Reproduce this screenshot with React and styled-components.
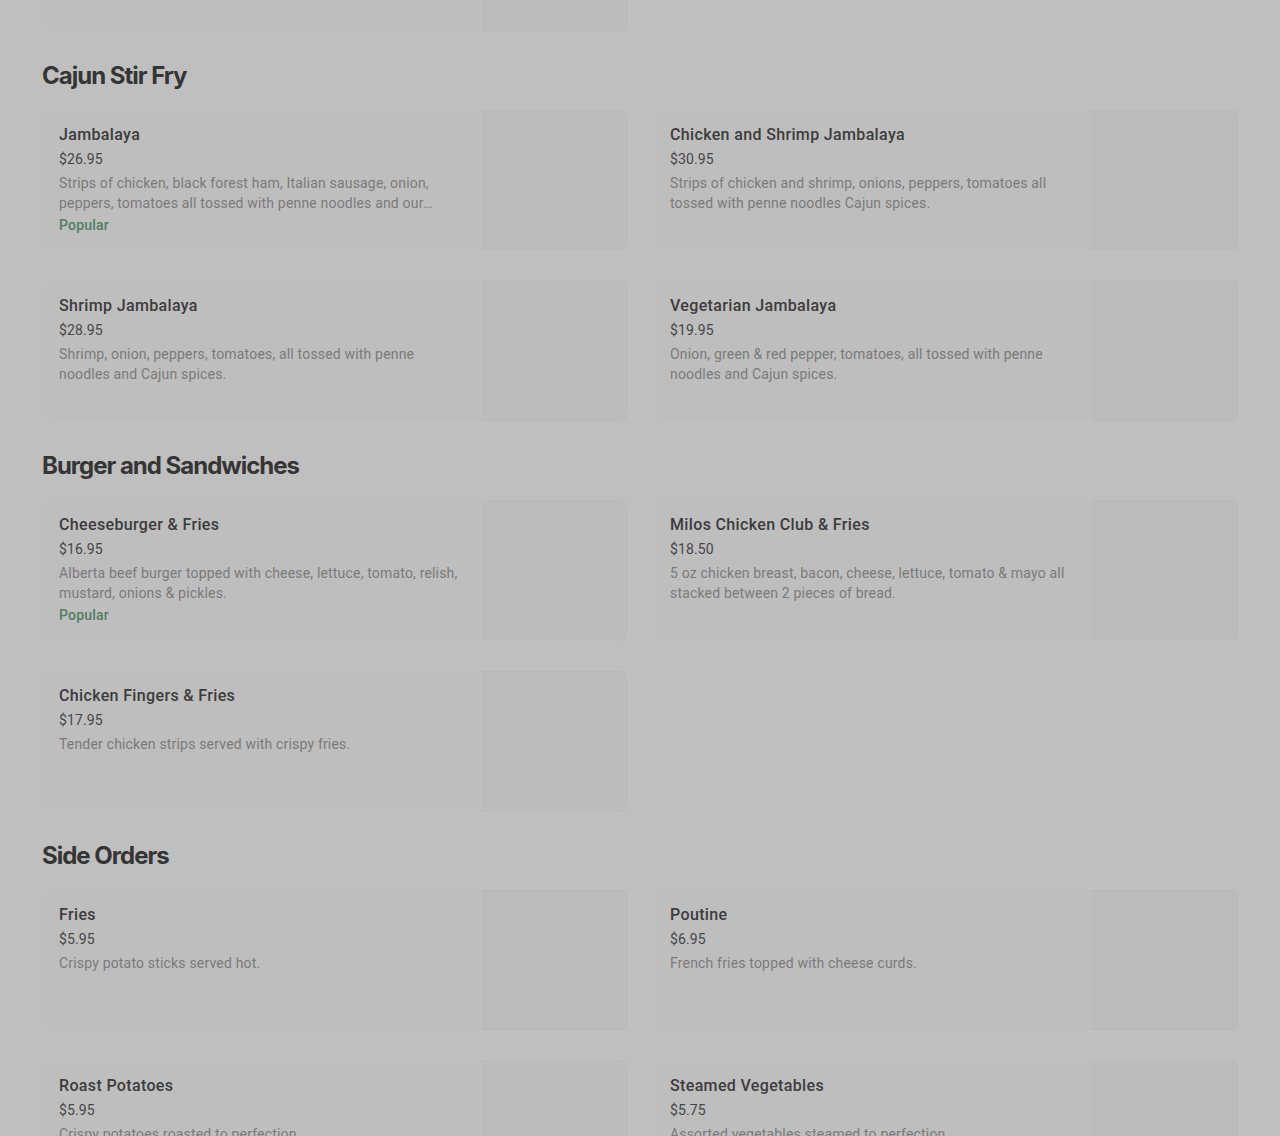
import React from "react";
import styled, { createGlobalStyle } from "styled-components";

const Global = createGlobalStyle`
  html, body { margin: 0; padding: 0; background: #bfbfbf; }
  body { overflow: hidden; font-family: Roboto, "Liberation Sans", Arial, sans-serif; }
  * { box-sizing: border-box; }
`;

const Page = styled.main`
  padding: 0 40px 0 42px;
  margin-top: -111px;
  min-height: 1300px;
`;

const Section = styled.section`
  display: flex;
  flex-direction: column;
`;

const Heading = styled.h2`
  margin: 27px 0 16px;
  font-family: Inter, "Liberation Sans", Arial, sans-serif;
  font-size: 24px;
  line-height: 32px;
  font-weight: 700;
  letter-spacing: -1px;
  color: #353535;
`;

const Grid = styled.div`
  display: grid;
  grid-template-columns: 1fr 1fr;
  column-gap: 24px;
  row-gap: 27px;
`;

const Card = styled.article`
  display: flex;
  height: 144px;
  border: 1px solid #c2c2c2;
  border-radius: 8px;
  background: #bebebe;
  overflow: hidden;
`;

const Body = styled.div`
  flex: 1;
  min-width: 0;
  padding: 16px;
  display: flex;
  flex-direction: column;
`;

const Title = styled.h3`
  margin: 0;
  font-size: 16px;
  line-height: 20px;
  font-weight: 500;
  letter-spacing: 0.35px;
  color: #3c3c3c;
`;

const Price = styled.div`
  margin-top: 4px;
  font-size: 14px;
  line-height: 20px;
  letter-spacing: 0.1px;
  color: #464646;
`;

const Desc = styled.p`
  margin: 4px 0 0;
  font-size: 14px;
  line-height: 20px;
  letter-spacing: 0.18px;
  color: #7a7a7a;
  display: -webkit-box;
  -webkit-line-clamp: 2;
  -webkit-box-orient: vertical;
  overflow: hidden;
`;

const Badge = styled.div`
  margin-top: 2px;
  font-size: 14px;
  line-height: 20px;
  font-weight: 500;
  letter-spacing: 0.2px;
  color: #4f7f63;
`;

const Thumb = styled.div`
  width: 146px;
  flex: none;
  background: #bbbbbb;
`;

const sections = [
  {
    title: null,
    items: [{ name: "", price: "", desc: "" }],
  },
  {
    title: "Cajun Stir Fry",
    items: [
      {
        name: "Jambalaya",
        price: "$26.95",
        desc: "Strips of chicken, black forest ham, Italian sausage, onion, peppers, tomatoes all tossed with penne noodles and our specially blended Cajun spices.",
        popular: true,
      },
      {
        name: "Chicken and Shrimp Jambalaya",
        price: "$30.95",
        desc: "Strips of chicken and shrimp, onions, peppers, tomatoes all tossed with penne noodles Cajun spices.",
      },
      {
        name: "Shrimp Jambalaya",
        price: "$28.95",
        desc: "Shrimp, onion, peppers, tomatoes, all tossed with penne noodles and Cajun spices.",
      },
      {
        name: "Vegetarian Jambalaya",
        price: "$19.95",
        desc: "Onion, green & red pepper, tomatoes, all tossed with penne noodles and Cajun spices.",
      },
    ],
  },
  {
    title: "Burger and Sandwiches",
    items: [
      {
        name: "Cheeseburger & Fries",
        price: "$16.95",
        desc: "Alberta beef burger topped with cheese, lettuce, tomato, relish, mustard, onions & pickles.",
        popular: true,
      },
      {
        name: "Milos Chicken Club & Fries",
        price: "$18.50",
        desc: "5 oz chicken breast, bacon, cheese, lettuce, tomato & mayo all stacked between 2 pieces of bread.",
      },
      {
        name: "Chicken Fingers & Fries",
        price: "$17.95",
        desc: "Tender chicken strips served with crispy fries.",
      },
    ],
  },
  {
    title: "Side Orders",
    items: [
      { name: "Fries", price: "$5.95", desc: "Crispy potato sticks served hot." },
      { name: "Poutine", price: "$6.95", desc: "French fries topped with cheese curds." },
      { name: "Roast Potatoes", price: "$5.95", desc: "Crispy potatoes roasted to perfection." },
      { name: "Steamed Vegetables", price: "$5.75", desc: "Assorted vegetables steamed to perfection." },
    ],
  },
];

function Item({ item }) {
  return (
    <Card>
      <Body>
        {item.name && <Title>{item.name}</Title>}
        {item.price && <Price>{item.price}</Price>}
        {item.desc && <Desc>{item.desc}</Desc>}
        {item.popular && <Badge>Popular</Badge>}
      </Body>
      <Thumb />
    </Card>
  );
}

export default function App() {
  return (
    <>
      <Global />
      <Page>
        {sections.map((s, i) => (
          <Section key={i}>
            {s.title && <Heading>{s.title}</Heading>}
            <Grid>
              {s.items.map((it, j) => (
                <Item key={j} item={it} />
              ))}
            </Grid>
          </Section>
        ))}
      </Page>
    </>
  );
}
